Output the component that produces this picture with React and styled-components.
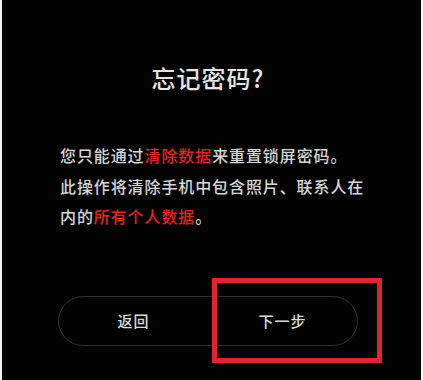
import React from "react";
import styled, { createGlobalStyle } from "styled-components";

const GlobalStyle = createGlobalStyle`
  html, body {
    margin: 0;
    padding: 0;
    background: #f4f4f4;
  }
  body {
    font-family: "Noto Sans CJK SC", "Noto Sans", sans-serif;
  }
`;

const Screen = styled.div`
  position: relative;
  margin: 0 2px;
  height: 380px;
  background: #030303;
  display: flex;
  flex-direction: column;
  align-items: center;
  box-sizing: border-box;
  padding: 63px 7px 0 0;
`;

const Title = styled.h1`
  margin: 0;
  font-size: 24px;
  line-height: 30px;
  font-weight: 500;
  color: #e6e6e6;
  letter-spacing: 1px;
`;

const Message = styled.div`
  align-self: stretch;
  margin-top: 47px;
  padding-left: 58px;
  font-size: 16px;
  line-height: 30.5px;
  font-weight: 500;
  color: #d6d6d6;
  letter-spacing: 0.9px;
`;

const Line = styled.div`
  white-space: nowrap;
`;

const Warn = styled.span`
  color: #e3231f;
`;

const ButtonBar = styled.div`
  margin-top: 64px;
  width: 300px;
  height: 50px;
  box-sizing: border-box;
  border: 1.5px solid #2f2f2f;
  border-radius: 25px;
  display: flex;
`;

const PillButton = styled.button`
  flex: 1;
  background: transparent;
  border: none;
  color: #dcdcdc;
  font-family: inherit;
  font-size: 15px;
  font-weight: 500;
  letter-spacing: 1px;
  padding: 0;
  cursor: pointer;
`;

const Highlight = styled.div`
  position: absolute;
  left: 210px;
  top: 278px;
  width: 170px;
  height: 85px;
  box-sizing: border-box;
  border: 5.5px solid #e0252c;
`;

export default function App() {
  return (
    <>
      <GlobalStyle />
      <Screen>
        <Title>忘记密码?</Title>
        <Message>
          <Line>
            您只能通过<Warn>清除数据</Warn>来重置锁屏密码。
          </Line>
          <Line>此操作将清除手机中包含照片、联系人在</Line>
          <Line>
            内的<Warn>所有个人数据</Warn>。
          </Line>
        </Message>
        <ButtonBar>
          <PillButton>返回</PillButton>
          <PillButton>下一步</PillButton>
        </ButtonBar>
        <Highlight />
      </Screen>
    </>
  );
}
